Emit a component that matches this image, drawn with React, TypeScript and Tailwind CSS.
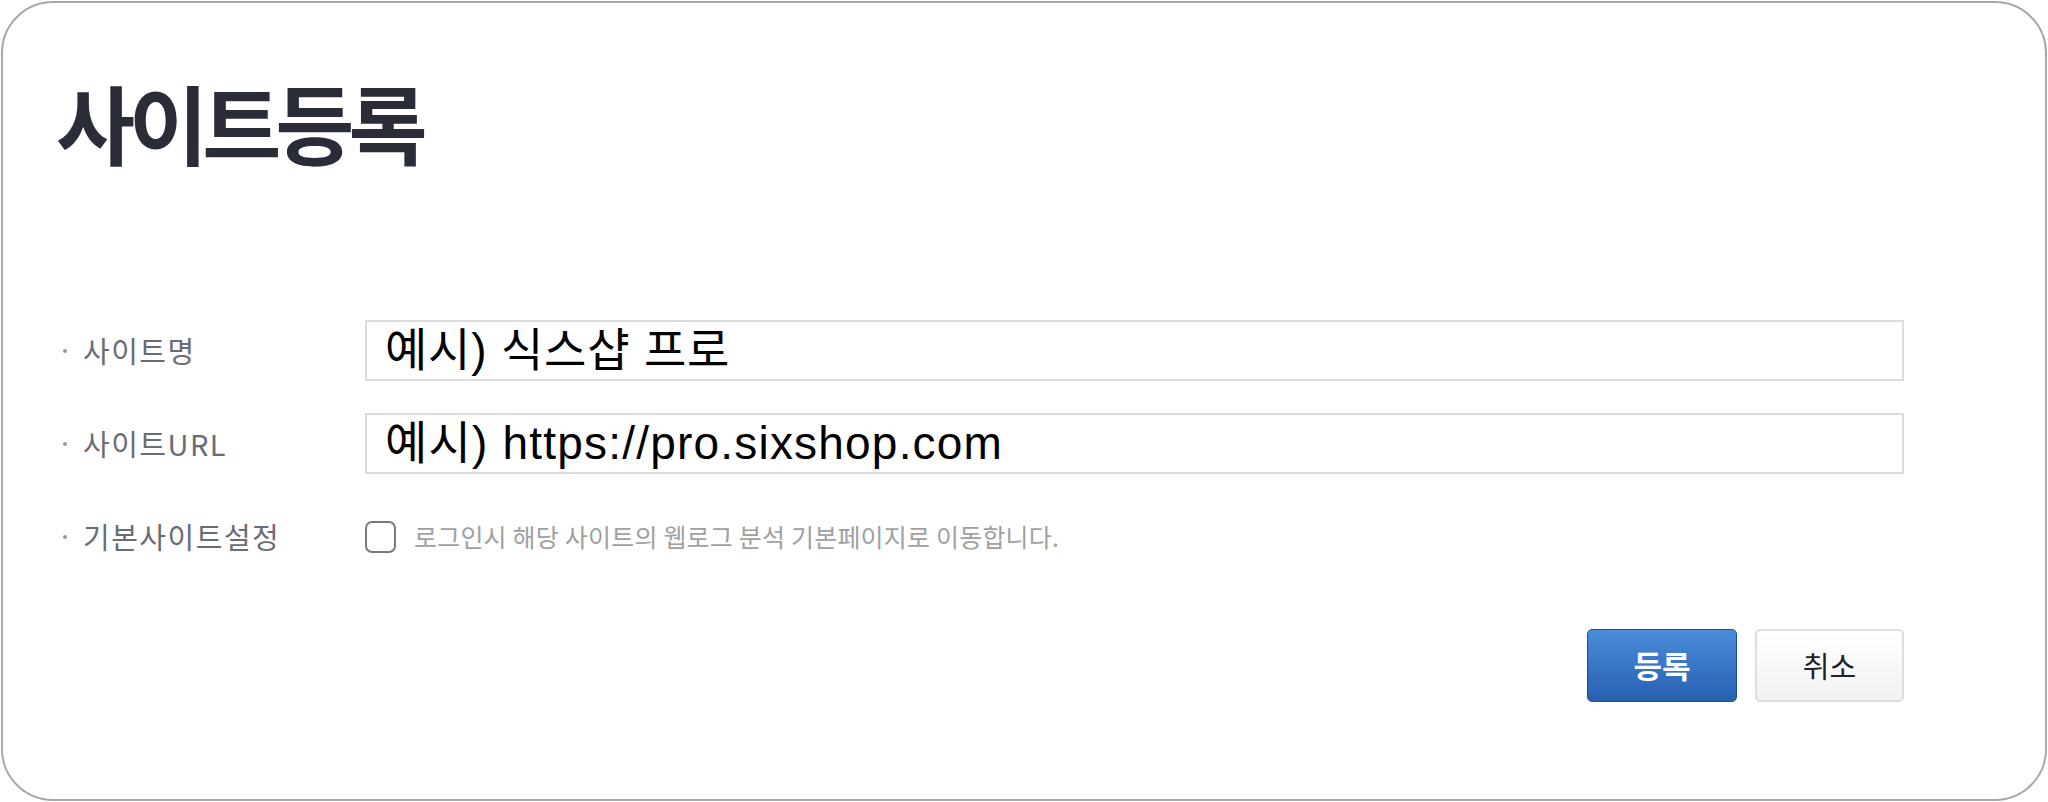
import React from "react";

const KR = "font-['Noto_Sans_CJK_KR',sans-serif]";
const MIX = "font-['Liberation_Sans','Noto_Sans_CJK_KR',sans-serif]";

function Label({ text }: { text: string }) {
  return (
    <div className="w-[309px] flex items-center shrink-0">
      <span className="ml-[7px] w-[4px] h-[4px] bg-[#9a9a9a] rounded-full" />
      <span className={`ml-[16px] text-[29px] leading-none tracking-[1.5px] text-[#6b6c73] ${KR}`}>{text}</span>
    </div>
  );
}

export default function App() {
  return (
    <div className="w-[2048px] h-[802px] bg-white p-[1px]">
      <div className="w-[2046px] h-[800px] border-2 border-[#a8a8a8] rounded-[52px] flex flex-col pl-[53px] pr-[141px] pt-[76px]">
        <h1 className={`text-[86px] leading-none font-bold tracking-[-6px] text-[#2a2d37] ${KR}`}>사이트등록</h1>
        <div className="mt-[155px] flex flex-col gap-[32px]">
          <div className="flex items-center h-[61px]">
            <Label text="사이트명" />
            <div className={`flex-1 h-[61px] border-2 border-[#dcdcdc] flex items-center pl-[18px] text-[46px] tracking-[0.8px] text-black ${MIX}`}>
              예시) 식스샵 프로
            </div>
          </div>
          <div className="flex items-center h-[61px]">
            <Label text="사이트URL" />
            <div className={`flex-1 h-[61px] border-2 border-[#dcdcdc] flex items-center pl-[18px] text-[46px] tracking-[1.2px] text-black ${MIX}`}>
              예시) https://pro.sixshop.com
            </div>
          </div>
          <div className="flex items-center h-[61px]">
            <Label text="기본사이트설정" />
            <div className="flex items-center">
              <span className="w-[31px] h-[32px] border-2 border-[#7a7a7a] rounded-[7px] bg-white" />
              <span className={`ml-[18px] text-[25px] leading-none tracking-[0.2px] text-[#a0a0a0] ${KR}`}>
                로그인시 해당 사이트의 웹로그 분석 기본페이지로 이동합니다.
              </span>
            </div>
          </div>
        </div>
        <div className="mt-[62px] flex justify-end gap-[18px]">
          <button className={`w-[150px] h-[73px] rounded-[5px] border border-[#1f4f9a] bg-gradient-to-b from-[#4b8cdb] to-[#2860b0] text-white text-[31px] font-bold ${KR}`}>
            등록
          </button>
          <button className={`w-[149px] h-[73px] rounded-[5px] border-2 border-[#dedede] bg-gradient-to-b from-white to-[#f2f2f2] text-[#222] text-[29px] ${KR}`}>
            취소
          </button>
        </div>
      </div>
    </div>
  );
}
